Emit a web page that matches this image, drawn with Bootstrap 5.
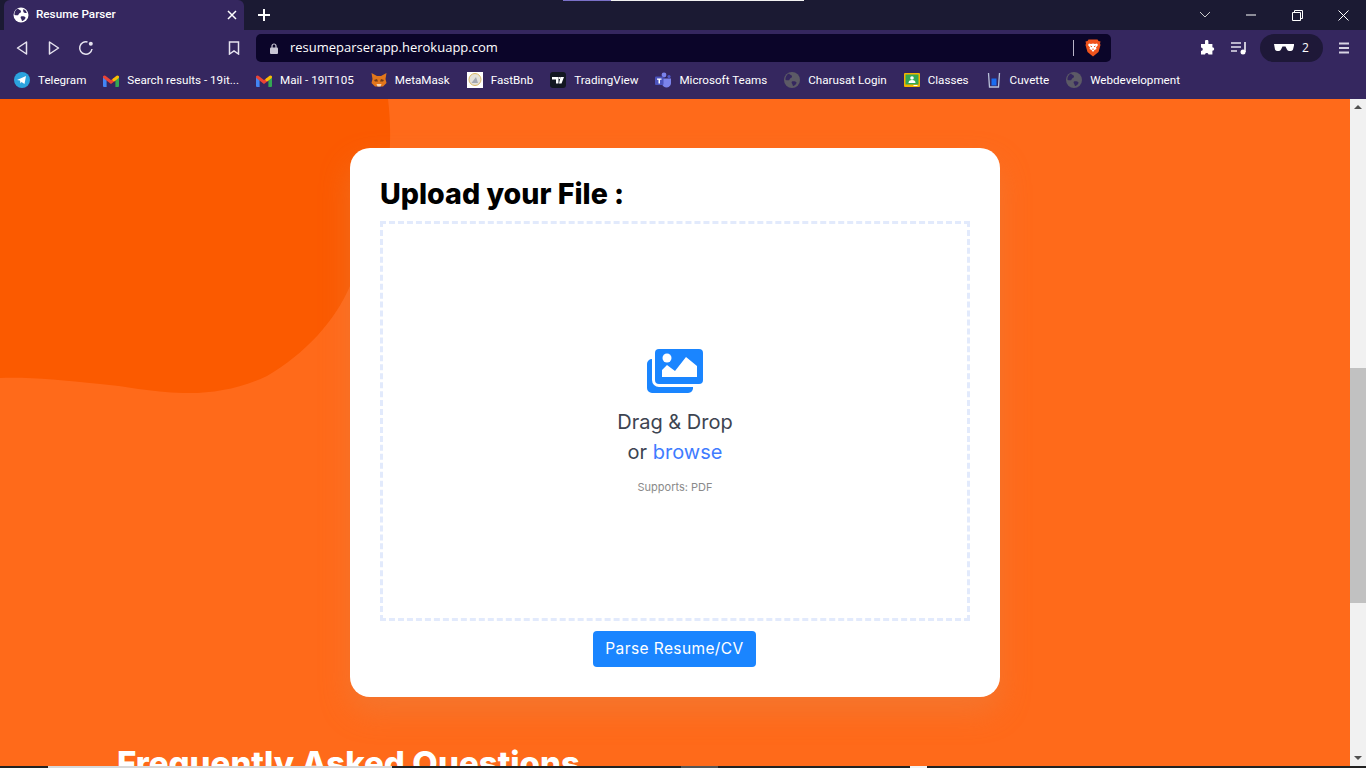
<!DOCTYPE html>
<html lang="en">
<head>
  <meta charset="UTF-8">
  <meta name="viewport" content="width=device-width, initial-scale=1.0">
  <title>Resume Parser</title>
  <link href="https://cdn.jsdelivr.net/npm/bootstrap@5.3.0/dist/css/bootstrap.min.css" rel="stylesheet">
  <style>
    html, body { height: 100%; overflow: hidden; }
    body { font-family: "Open Sans", "Noto Sans", sans-serif; background: #ff6a1a; position: relative; }
    .tabstrip { height: 30px; background: #1b1a33; color: #fff; font-size: 12px; }
    .tabitem { width: 240px; height: 30px; margin-left: 4px; background: #35275f; border-radius: 6px 6px 0 0; padding: 0 7px 0 9px; font-family: Roboto, sans-serif; font-size: 11.7px; font-weight: 500; }
    .tabglobe { margin-right: 7px; }
    .newtab { margin-left: 13px; }
    .winbtn { width: 46px; height: 30px; }
    .topstrip { position: absolute; left: 563px; top: 0; height: 1px; width: 241px; display: flex; }
    .topstrip i { width: 48px; background: #7a70c8; }
    .topstrip b { flex-grow: 1; background: #f2f2f2; }
    .toolbar { height: 36px; background: #35275f; padding-left: 14px; }
    .navgap { margin-left: 16px; }
    .bookmarkbtn { margin-left: 134px; }
    .urlbox { width: 855px; height: 28px; background: #0b0529; border-radius: 5px; color: #fff; font-size: 13px; margin-left: 16px; padding-left: 14px; padding-right: 10px; }
    .urlicon { margin-right: 12px; }
    .urlsep { width: 1px; height: 16px; background: #b9b5c8; margin-right: 11px; }
    .extbtn { margin-left: 88px; }
    .shieldpill { width: 63px; height: 28px; margin-left: 13px; border-radius: 14px; background: #1e1838; color: #fff; font-size: 12px; }
    .bookbar { height: 33px; background: #35275f; color: #fff; font-family: Roboto, sans-serif; font-size: 11.65px; padding-left: 14px; padding-bottom: 4px; gap: 17px; }
    .bookbar svg { margin-right: 8px; flex: none; }
    .pagearea { height: 669px; }
    .pagecontent { background: #ff6a1a; overflow: hidden; }
    .blobshape { position: absolute; left: 0; top: 0; }
    .uploadcard { position: relative; width: 650px; height: 549px; margin-top: 49px; background: #fff; border-radius: 20px; padding: 28px 30px 26px; box-shadow: 0 15px 30px rgba(230, 130, 70, .45); }
    .uploadtitle { font-family: "Inter", sans-serif; font-weight: 800; font-size: 28.6px; line-height: 36px; color: #000; margin: 0 0 9px; }
    .dropzone { height: 400px; border: 3px dashed #e2eafc; padding-top: 125px; font-family: "Inter", sans-serif; color: #3d4451; }
    .dropicon { margin-bottom: 13px; }
    .droptext { font-size: 20px; line-height: 30px; font-weight: 400; }
    .browselink { color: #3f7cff; }
    .supportstext { font-size: 11px; line-height: 17px; color: #8a8a8a; margin-top: 12px; }
    .parsewrap { margin: 10px 0 0 213px; }
    .parsebtn { width: 163px; height: 36px; background: #1a85ff; color: #fff; border: 0; border-radius: 4px; font-family: "Inter", sans-serif; font-size: 15.5px; letter-spacing: .4px; padding: 0; }
    .faqtitle { position: relative; margin: 46px 0 0 117px; font-family: "Inter", sans-serif; font-weight: 800; font-size: 33px; line-height: 40px; color: #fff; white-space: nowrap; }
    .scrolltrack { width: 16px; background: #f1f1f1; position: relative; }
    .scrollthumb { position: absolute; left: 0; right: 0; top: 269px; height: 235px; background: #c1c1c1; }
    .arrowup, .arrowdown { position: absolute; left: 4px; width: 0; height: 0; border-left: 4px solid transparent; border-right: 4px solid transparent; }
    .arrowup { top: 6px; border-bottom: 4px solid #505050; }
    .arrowdown { bottom: 8px; border-top: 4px solid #505050; }
    .bottomstrip { position: absolute; left: 0; right: 0; bottom: 0; height: 2px; background: #222; }
    .bottomstrip span { position: absolute; top: 0; bottom: 0; }
    .stripa { left: 48px; width: 344px; background: #d8d8d8; }
    .stripb { left: 681px; width: 37px; background: #555; }
    .stripc { left: 910px; width: 17px; background: #f2f2f2; }
  </style>
</head>
<body>
  <div class="topstrip"><i></i><b></b></div>
  <div class="tabstrip d-flex align-items-center">
    <div class="tabitem d-flex align-items-center">
      <svg width="16" height="16" viewBox="0 0 16 16" class="tabglobe"><circle cx="8" cy="8" r="7.500" fill="#fff"/><path d="M5 1.500C6 3 8 3 8 4.500S6 6 5.500 7.500 3 8 1.500 8C1 5.500 2.500 2.500 5 1.500zM8 9.500c1.500-.5 4 0 4.500 1 .3 1-2 3.500-3.500 3.500-.5-1-.5-2-1-2.500s-.5-1.500 0-2zM10.500 2c1.500.7 3 2.300 3.300 4-1.300.3-2.800 0-3.300-1s-.5-2 0-3z" fill="#35275f"/></svg>
      <span class="flex-grow-1">Resume Parser</span>
      <svg width="10" height="10" viewBox="0 0 10 10"><path d="M1 1l8 8M9 1l-8 8" stroke="#fff" stroke-width="1.500"/></svg>
    </div>
    <svg width="14" height="14" viewBox="0 0 14 14" class="newtab"><path d="M7 1v12M1 7h12" stroke="#fff" stroke-width="2"/></svg>
    <div class="ms-auto d-flex align-items-center">
      <div class="winbtn d-flex align-items-center justify-content-center"><svg width="12" height="8" viewBox="0 0 12 8"><path d="M1 1l5 5 5-5" fill="none" stroke="#ccc"/></svg></div>
      <div class="winbtn d-flex align-items-center justify-content-center"><svg width="10" height="2" viewBox="0 0 10 2"><path d="M0 1h10" stroke="#fff"/></svg></div>
      <div class="winbtn d-flex align-items-center justify-content-center"><svg width="11" height="11" viewBox="0 0 11 11"><path d="M.5 2.500h8v8h-8zM2.500 2.500v-2h8v8h-2" fill="none" stroke="#fff"/></svg></div>
      <div class="winbtn d-flex align-items-center justify-content-center"><svg width="11" height="11" viewBox="0 0 11 11"><path d="M.5.500l10 10M10.500.500l-10 10" stroke="#fff"/></svg></div>
    </div>
  </div>
  <div class="toolbar d-flex align-items-center">
    <svg width="16" height="16" viewBox="0 0 16 16"><path d="M12.500 2L3.500 8l9 6z" fill="none" stroke="#e6e3ef" stroke-width="1.500" stroke-linejoin="round"/></svg>
    <svg width="16" height="16" viewBox="0 0 16 16" class="navgap"><path d="M3.500 2l9 6-9 6z" fill="none" stroke="#e6e3ef" stroke-width="1.500" stroke-linejoin="round"/></svg>
    <svg width="16" height="16" viewBox="0 0 16 16" class="navgap"><path d="M14 9A6.200 6.200 0 1 1 9.500 2" fill="none" stroke="#e6e3ef" stroke-width="1.500"/><circle cx="12.800" cy="3.700" r="2" fill="#e6e3ef"/></svg>
    <svg width="12" height="14" viewBox="0 0 12 14" class="bookmarkbtn"><path d="M1.500 1h9v12L6 10l-4.500 3z" fill="none" stroke="#e6e3ef" stroke-width="1.500"/></svg>
    <div class="urlbox d-flex align-items-center">
      <svg width="8" height="11" viewBox="0 0 8 11" class="flex-shrink-0 urlicon"><path d="M2 5V3a2 2 0 0 1 4 0v2" fill="none" stroke="#c9c6d4" stroke-width="1.200"/><rect y="4.500" width="8" height="6.500" rx="1" fill="#c9c6d4"/></svg>
      <span class="flex-grow-1">resumeparserapp.herokuapp.com</span>
      <span class="urlsep"></span>
      <svg width="16" height="18" viewBox="0 0 16 18"><path d="M3.500 .500h9l1 1.500 2 .5-.5 2 .5 1.500-2 7-5.500 4.500L2.500 13 .5 6l.5-1.500-.5-2 2-.5z" fill="#f0531c"/><path d="M4 4.500l2 .5 2-.5 2 .5 2-.5 1 1.500L11 8.500l.5 1.500L9.500 11 8 13l-1.500-2-2-1L5 8.500 3 6z" fill="#fff"/><path d="M5.500 7L7 7.800M10.500 7L9 7.800M8 9.500v1.500" stroke="#f0531c"/></svg>
    </div>
    <svg width="16" height="16" viewBox="0 0 16 16" class="extbtn"><path d="M6 1.500a1.700 1.700 0 0 1 3.400 0V4h4v3.200a1.800 1.800 0 0 1 0 3.600v3.700H9.500a1.800 1.800 0 0 0-3.500 0H2V11a1.800 1.800 0 0 0 0-3.600V4h4z" fill="#fff"/></svg>
    <svg width="16" height="14" viewBox="0 0 16 14" class="navgap"><path d="M0 2h10M0 6h10M0 10h6" stroke="#e6e3ef" stroke-width="1.500"/><path d="M14 1v10" stroke="#fff" stroke-width="1.500"/><circle cx="12" cy="11" r="2.500" fill="#fff"/></svg>
    <div class="shieldpill d-flex align-items-center justify-content-center gap-2">
      <svg width="20" height="8" viewBox="0 0 20 8"><path d="M0 0h20v1.500l-1 4c-1 2-5 2-6 0l-1.500-3h-3L7 5.500c-1 2-5 2-6 0z" fill="#fff"/></svg>
      <span>2</span>
    </div>
    <svg width="10" height="12" viewBox="0 0 10 12" class="ms-3"><path d="M0 1.500h10M0 6h10M0 10.500h10" stroke="#d8d4e4" stroke-width="2"/></svg>
  </div>
  <div class="bookbar d-flex align-items-center">
    <span class="d-flex align-items-center"><svg width="16" height="16" viewBox="0 0 16 16"><circle cx="8" cy="8" r="8" fill="#2ba3de"/><path d="M3 8l9-4-1.500 8-3-2-1 1.500-.5-3z" fill="#fff"/></svg>Telegram</span>
    <span class="d-flex align-items-center"><svg width="16" height="13" viewBox="0 0 16 13"><path d="M0 3v9a1 1 0 0 0 1 1h2.600V5z" fill="#4285f4"/><path d="M16 3v9a1 1 0 0 1-1 1h-2.600V5z" fill="#34a853"/><path d="M1.500 3L8 8l3-2.300" fill="none" stroke="#ea4335" stroke-width="3" stroke-linecap="round"/><path d="M11 5.700L14.500 3" fill="none" stroke="#fbbc04" stroke-width="3" stroke-linecap="round"/></svg>Search results - 19it...</span>
    <span class="d-flex align-items-center"><svg width="16" height="13" viewBox="0 0 16 13"><path d="M0 3v9a1 1 0 0 0 1 1h2.600V5z" fill="#4285f4"/><path d="M16 3v9a1 1 0 0 1-1 1h-2.600V5z" fill="#34a853"/><path d="M1.500 3L8 8l3-2.300" fill="none" stroke="#ea4335" stroke-width="3" stroke-linecap="round"/><path d="M11 5.700L14.500 3" fill="none" stroke="#fbbc04" stroke-width="3" stroke-linecap="round"/></svg>Mail - 19IT105</span>
    <span class="d-flex align-items-center"><svg width="16" height="16" viewBox="0 0 16 16"><path d="M.5 1l5.500 3h4l5.500-3-1 6 1 4-3.500 3.500h-8L.5 11l1-4z" fill="#e2761b"/><path d="M3 8l3-1 1 2.500H4zM13 8l-3-1-1 2.500h3z" fill="#763d16"/><path d="M5.500 12h5l-1 2.500h-3z" fill="#f5d6b8"/></svg>MetaMask</span>
    <span class="d-flex align-items-center"><svg width="16" height="16" viewBox="0 0 16 16"><rect width="16" height="16" fill="#fff"/><circle cx="8" cy="7.500" r="6" fill="#e4e2da" stroke="#d9b866"/><path d="M4.500 11l4.500-6 2 6z" fill="#a4a9b2"/></svg>FastBnb</span>
    <span class="d-flex align-items-center"><svg width="16" height="16" viewBox="0 0 16 16"><rect width="16" height="16" rx="3" fill="#131722"/><path d="M2 5h6.500v6.500H6V7.500H2zM10.500 5H14l-2.500 6.500H9z" fill="#fff"/><circle cx="9.500" cy="6" r="1" fill="#fff"/></svg>TradingView</span>
    <span class="d-flex align-items-center"><svg width="16" height="16" viewBox="0 0 16 16"><circle cx="9" cy="3" r="2.400" fill="#7b83eb"/><circle cx="14" cy="4.500" r="1.600" fill="#5059c9"/><path d="M6 6.500h10v4a4.500 4.500 0 0 1-9 1z" fill="#7b83eb"/><rect y="4.500" width="8.500" height="8.500" rx="1" fill="#4b53bc"/><path d="M2 6.500h4.500v1.200H5V11.500H3.500V7.700H2z" fill="#fff"/></svg>Microsoft Teams</span>
    <span class="d-flex align-items-center"><svg width="16" height="16" viewBox="0 0 16 16"><circle cx="8" cy="8" r="8" fill="#5c5a66"/><path d="M5 1.500C6 3 8 3 8 4.500S6 6 5.500 7.500 3 8 1.500 8C1 5.500 2.500 2.500 5 1.500zM8 9.500c1.500-.5 4 0 4.500 1 .3 1-2 3.500-3.500 3.500-.5-1-.5-2-1-2.500s-.5-1.500 0-2z" fill="#35275f"/></svg>Charusat Login</span>
    <span class="d-flex align-items-center"><svg width="16" height="16" viewBox="0 0 16 16"><rect y="1" width="16" height="14" rx="1" fill="#f4b400"/><rect x="1.500" y="2.500" width="13" height="10" fill="#34a853"/><circle cx="8" cy="6" r="1.800" fill="#fff"/><path d="M4.500 11a3.500 3 0 0 1 7 0z" fill="#fff"/><rect x="9.500" y="13" width="4" height="1" fill="#fff"/></svg>Classes</span>
    <span class="d-flex align-items-center"><svg width="16" height="16" viewBox="0 0 16 16"><path d="M2.500 1l1 14h9l1-14" fill="none" stroke="#b9c1d9" stroke-width="1.300"/><rect x="5.500" y="6.500" width="5" height="7" fill="#1a6cf0"/></svg>Cuvette</span>
    <span class="d-flex align-items-center"><svg width="16" height="16" viewBox="0 0 16 16"><circle cx="8" cy="8" r="8" fill="#5c5a66"/><path d="M5 1.500C6 3 8 3 8 4.500S6 6 5.500 7.500 3 8 1.500 8C1 5.500 2.500 2.500 5 1.500zM8 9.500c1.500-.5 4 0 4.500 1 .3 1-2 3.500-3.500 3.500-.5-1-.5-2-1-2.500s-.5-1.500 0-2z" fill="#35275f"/></svg>Webdevelopment</span>
  </div>
  <div class="pagearea d-flex position-relative">
    <div class="pagecontent flex-grow-1 position-relative">
      <svg class="blobshape" width="400" height="300" viewBox="0 0 400 300"><path d="M0 0H388C391 25 391 50 387 80C378 130 365 160 350 187C335 222 305 255 267 277C240 290 210 295 183 294C150 293 125 287 100 285C60 281 30 278 0 279Z" fill="#fb5a00"/></svg>
      <div class="uploadcard mx-auto">
        <h1 class="uploadtitle">Upload your File :</h1>
        <div class="dropzone d-flex flex-column align-items-center text-center">
          <svg width="58" height="45" viewBox="0 0 58 45" class="dropicon"><path d="M1 15a5 5 0 0 1 5-5v21a7 7 0 0 0 7 7h34a5 5 0 0 1-5 6H6a5 5 0 0 1-5-5z" fill="#1a85ff"/><rect x="9" y="0" width="48" height="35" rx="4" fill="#1a85ff"/><circle cx="21" cy="9" r="4.500" fill="#fff"/><path d="M16 28v-7l5-5 8 6 11-14 11 9v11z" fill="#fff"/></svg>
          <div class="droptext">Drag &amp; Drop</div>
          <div class="droptext">or <span class="browselink">browse</span></div>
          <div class="supportstext">Supports: PDF</div>
        </div>
        <div class="parsewrap"><button type="button" class="btn parsebtn">Parse Resume/CV</button></div>
      </div>
      <h2 class="faqtitle">Frequently Asked Questions</h2>
    </div>
    <div class="scrolltrack"><span class="arrowup"></span><div class="scrollthumb"></div><span class="arrowdown"></span></div>
    <div class="bottomstrip"><span class="stripa"></span><span class="stripb"></span><span class="stripc"></span></div>
  </div>
  <script src="https://cdn.jsdelivr.net/npm/bootstrap@5.3.0/dist/js/bootstrap.bundle.min.js"></script>
</body>
</html>
